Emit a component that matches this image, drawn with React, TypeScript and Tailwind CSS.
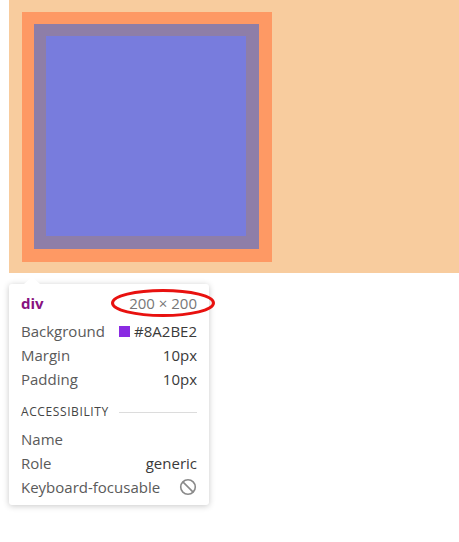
import React from "react";

const rows = [
  { label: "Margin", value: "10px" },
  { label: "Padding", value: "10px" },
];

function BanIcon() {
  return (
    <svg width="18" height="18" viewBox="0 0 18 18" fill="none" stroke="#8a8a8a" strokeWidth="1.6">
      <circle cx="9" cy="9" r="7.3" />
      <line x1="3.9" y1="3.9" x2="14.1" y2="14.1" />
    </svg>
  );
}

export default function App() {
  return (
    <div className="h-[542px] w-[459px] bg-white font-['Open_Sans','Noto_Sans',sans-serif] overflow-hidden">
      {/* Highlighted element: margin / padding / content boxes */}
      <div className="ml-[9px] h-[273px] bg-[#f8cc9e] pl-[13px] pt-[12px]">
        <div className="w-[250px] h-[250px] bg-[#fe9964] pl-[12px] pt-[12px]">
          <div className="w-[225px] h-[225px] bg-[#8e7ea8] pl-[12px] pt-[12px]">
            <div className="w-[200px] h-[200px] bg-[#787cdd]" />
          </div>
        </div>
      </div>

      {/* Inspect tooltip */}
      <div className="relative ml-[9px] mt-[11px] w-[200px] rounded-[3px] bg-white px-[12px] pt-[7px] pb-[6px] shadow-[0_1px_6px_rgba(0,0,0,0.22)]">
        <div className="absolute -top-[7px] left-[15px] h-0 w-0 border-x-[8px] border-b-[7px] border-x-transparent border-b-white" />

        <div className="relative flex h-[24px] items-center justify-between text-[15px]">
          <span className="font-bold text-[#881280]">div</span>
          <span className="text-[#777]">200 × 200</span>
          <svg className="absolute -right-[20px] -top-[3px]" width="106" height="30" viewBox="0 0 106 30" fill="none">
            <ellipse cx="52" cy="15" rx="50.5" ry="12.5" stroke="#e8110f" strokeWidth="3" />
          </svg>
        </div>

        <div className="mt-[4px] flex h-[24px] items-center justify-between text-[15px]">
          <span className="text-[#5a5a5a]">Background</span>
          <span className="flex items-center gap-[4px] text-[#3a3a3a]">
            <span className="inline-block h-[11px] w-[11px] bg-[#8a2be2]" />
            #8A2BE2
          </span>
        </div>
        {rows.map((r) => (
          <div key={r.label} className="flex h-[24px] items-center justify-between text-[15px]">
            <span className="text-[#5a5a5a]">{r.label}</span>
            <span className="text-[#3a3a3a]">{r.value}</span>
          </div>
        ))}

        <div className="mt-[11px] flex h-[20px] items-center gap-[10px]">
          <span className="text-[12px] font-medium tracking-[0.6px] text-[#444]">ACCESSIBILITY</span>
          <div className="h-px flex-1 bg-[#dcdcdc]" />
        </div>

        <div className="mt-[5px] flex h-[24px] items-center text-[15px] text-[#5a5a5a]">Name</div>
        <div className="flex h-[24px] items-center justify-between text-[15px]">
          <span className="text-[#5a5a5a]">Role</span>
          <span className="text-[#3a3a3a]">generic</span>
        </div>
        <div className="flex h-[24px] items-center justify-between text-[15px]">
          <span className="text-[#5a5a5a]">Keyboard-focusable</span>
          <BanIcon />
        </div>
      </div>
    </div>
  );
}
